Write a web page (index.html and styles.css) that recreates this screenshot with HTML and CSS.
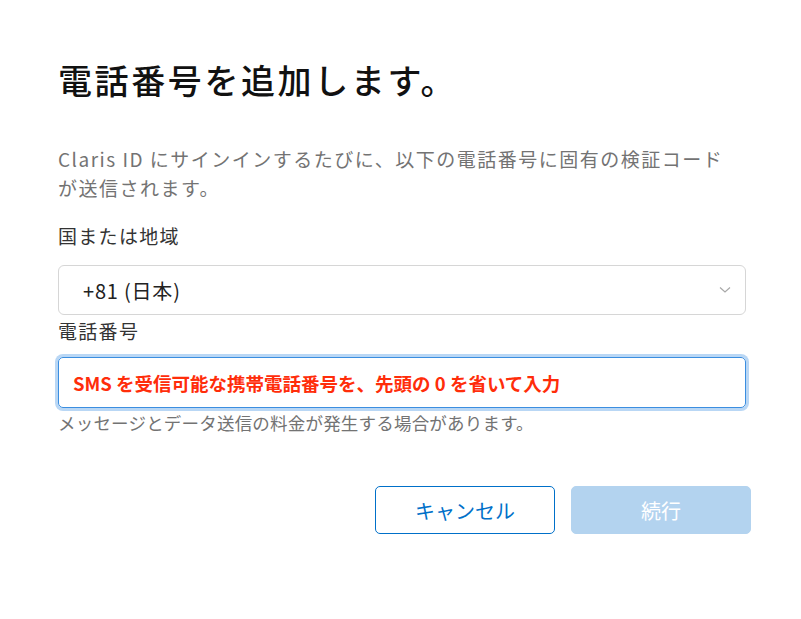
FILE: index.html
```html
<!DOCTYPE html>
<html lang="ja">
<head>
<meta charset="utf-8">
<link rel="stylesheet" href="styles.css">
</head>
<body>
<div class="page">
  <h1 class="title">電話番号を追加します。</h1>
  <p class="intro">Claris ID にサインインするたびに、以下の電話番号に固有の検証コードが送信されます。</p>
  <label class="label label-country">国または地域</label>
  <div class="select">
    <span class="select-text">+81 (日本)</span>
    <svg class="chev" width="12" height="8" viewBox="0 0 12 8"><path d="M1 1.5 L6 6 L11 1.5" fill="none" stroke="#a8a8a8" stroke-width="1.2"/></svg>
  </div>
  <label class="label label-phone">電話番号</label>
  <div class="input">
    <span class="placeholder">SMS を受信可能な携帯電話番号を、先頭の 0 を省いて入力</span>
  </div>
  <p class="hint">メッセージとデータ送信の料金が発生する場合があります。</p>
  <div class="actions">
    <button class="btn btn-cancel">キャンセル</button>
    <button class="btn btn-continue">続行</button>
  </div>
</div>
</body>
</html>
```
FILE: styles.css
```css
html, body {
  margin: 0;
  padding: 0;
  background: #ffffff;
}
body {
  font-family: "Noto Sans CJK JP", "Noto Sans", sans-serif;
  color: #1d1d1f;
}
.page {
  padding: 56px 0 0 58px;
  width: 688px;
}
.title {
  margin: 0;
  font-size: 34px;
  font-weight: 500;
  line-height: 48px;
  color: #111111;
  letter-spacing: 2.6px;
}
.intro {
  margin: 40px 0 0;
  font-size: 19px;
  line-height: 29px;
  color: #737373;
  width: 680px;
  letter-spacing: 1.5px;
}
.label {
  display: block;
  font-size: 19px;
  line-height: 28px;
  color: #333333;
  letter-spacing: 1.3px;
}
.label-country {
  margin-top: 20px;
}
.select {
  margin-top: 15px;
  height: 48px;
  border: 1px solid #d6d6d6;
  border-radius: 6px;
  display: flex;
  align-items: center;
  justify-content: space-between;
  padding: 0 14px 0 24px;
}
.select-text {
  font-size: 20px;
  color: #222222;
  letter-spacing: 0.8px;
}
.label-phone {
  margin-top: 2px;
}
.input {
  margin-top: 12px;
  height: 49px;
  border: 1px solid #3b8ee0;
  border-radius: 5px;
  box-shadow: 0 0 0 3px #b9d7f5;
  display: flex;
  align-items: center;
  padding: 0 14px;
}
.placeholder {
  font-size: 18.5px;
  font-weight: 700;
  color: #ff2d0a;
}
.hint {
  margin: 2px 0 0;
  font-size: 17.5px;
  line-height: 26px;
  color: #737373;
  letter-spacing: 0.2px;
}
.actions {
  margin-top: 50px;
  display: flex;
  justify-content: flex-end;
  gap: 16px;
  width: 693px;
}
.btn {
  width: 180px;
  height: 48px;
  border-radius: 5px;
  font-family: "Noto Sans CJK JP", sans-serif;
  font-size: 20px;
  padding: 0;
}
.btn-cancel {
  background: #ffffff;
  border: 1px solid #0070c9;
  color: #0070c9;
}
.btn-continue {
  background: #b3d3ef;
  border: 1px solid #b3d3ef;
  color: #ffffff;
}
```
